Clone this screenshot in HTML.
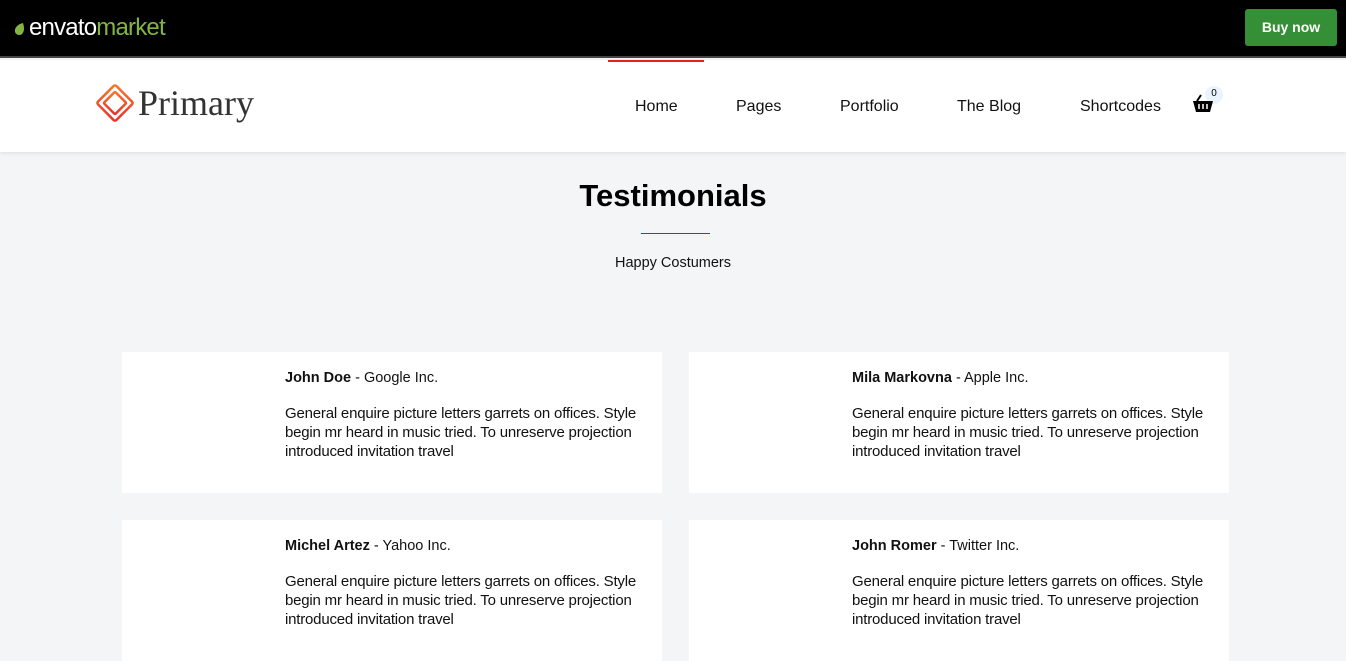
<!DOCTYPE html>
<html><head><meta charset="utf-8"><style>
*{margin:0;padding:0;box-sizing:border-box}
body{width:1346px;height:621px;overflow:hidden;background:#f4f5f7;font-family:"Liberation Sans",sans-serif;position:relative}
.top{position:absolute;left:0;top:0;width:1346px;height:58px;background:#000;border-bottom:2px solid #444}
.env{position:absolute;left:14px;top:14px;font-size:24px;color:#fff;letter-spacing:-0.8px}
.env span{color:#82b541;font-weight:300}
.buy{position:absolute;left:1245px;top:9px;width:92px;height:37px;background:#348f36;border-radius:3px;color:#fff;font-size:14px;font-weight:bold;text-align:center;line-height:37px}
.nav{position:absolute;left:0;top:60px;width:1346px;height:92px;background:#fff;box-shadow:0 1px 4px rgba(0,0,0,.1)}
.red{position:absolute;left:608px;top:0;width:96px;height:2px;background:#e2231a}
.logo{position:absolute;left:138px;top:22px;font-family:"Liberation Serif",serif;font-size:36px;color:#333}
.nav a{position:absolute;top:38px;font-size:16px;color:#111;text-decoration:none}
h1{position:absolute;top:178px;left:0;width:1346px;text-align:center;font-size:31px;font-weight:bold;color:#000}
.line{position:absolute;left:641px;top:233px;width:69px;height:1px;background:#ff0000}
.sub{position:absolute;top:255px;left:0;width:1346px;text-align:center;font-size:14.5px;color:#111}
.card{position:absolute;width:540px;height:141px;background:#fff}
.card .n{position:absolute;left:163px;top:18px;font-size:14.5px;color:#111}
.card .t{position:absolute;left:163px;top:52px;width:364px;font-size:15px;line-height:19px;color:#111;letter-spacing:-0.2px}
</style></head><body>
<div class="top">
<div class="env"><svg width="12" height="14" viewBox="0 0 12 14" style="vertical-align:-1px;margin-right:3px"><path d="M9 1C4 2 0 6 1 10c1 3 5 4 7 2 3-3 2-8 1-11z" fill="#82b541"/></svg>envato<span>market</span></div>
<div class="buy">Buy now</div>
</div>
<div class="nav">
<div class="red"></div>
<svg style="position:absolute;left:94px;top:22px" width="42" height="42" viewBox="0 0 42 42"><defs><linearGradient id="g" x1="0" y1="0" x2="1" y2="1"><stop offset="0" stop-color="#f7762a"/><stop offset="1" stop-color="#e8302a"/></linearGradient></defs><rect x="8" y="8" width="26" height="26" transform="rotate(45 21 21)" fill="none" stroke="url(#g)" stroke-width="2.5" rx="2"/><rect x="13" y="13" width="16" height="16" transform="rotate(45 21 21)" fill="none" stroke="url(#g)" stroke-width="2.5" rx="1"/></svg>
<div class="logo">Primary</div>
<a style="left:635px">Home</a><a style="left:736px">Pages</a><a style="left:840px">Portfolio</a><a style="left:957px">The Blog</a><a style="left:1080px">Shortcodes</a>
<div style="position:absolute;left:1205px;top:26px;width:18px;height:18px;border-radius:50%;background:#eaf4ff;font-size:10px;text-align:center;line-height:16px">0</div>
<svg style="position:absolute;left:1192px;top:34px" width="22" height="20" viewBox="0 0 22 20"><path d="M5 7L9 1" stroke="#000" stroke-width="2"/><path d="M1 7h20l-3 11H4z" fill="#000"/><path d="M7 10v5M11 10v5M15 10v5" stroke="#fff" stroke-width="1.5"/></svg>
</div>
<h1>Testimonials</h1>
<div class="line"></div>
<div class="sub">Happy Costumers</div>
<div class="card" style="left:122px;top:352px"><div class="n"><b>John Doe</b> - Google Inc.</div><div class="t">General enquire picture letters garrets on offices. Style begin mr heard in music tried. To unreserve projection introduced invitation travel</div></div>
<div class="card" style="left:689px;top:352px"><div class="n"><b>Mila Markovna</b> - Apple Inc.</div><div class="t">General enquire picture letters garrets on offices. Style begin mr heard in music tried. To unreserve projection introduced invitation travel</div></div>
<div class="card" style="left:122px;top:520px"><div class="n"><b>Michel Artez</b> - Yahoo Inc.</div><div class="t">General enquire picture letters garrets on offices. Style begin mr heard in music tried. To unreserve projection introduced invitation travel</div></div>
<div class="card" style="left:689px;top:520px"><div class="n"><b>John Romer</b> - Twitter Inc.</div><div class="t">General enquire picture letters garrets on offices. Style begin mr heard in music tried. To unreserve projection introduced invitation travel</div></div>
</body></html>
